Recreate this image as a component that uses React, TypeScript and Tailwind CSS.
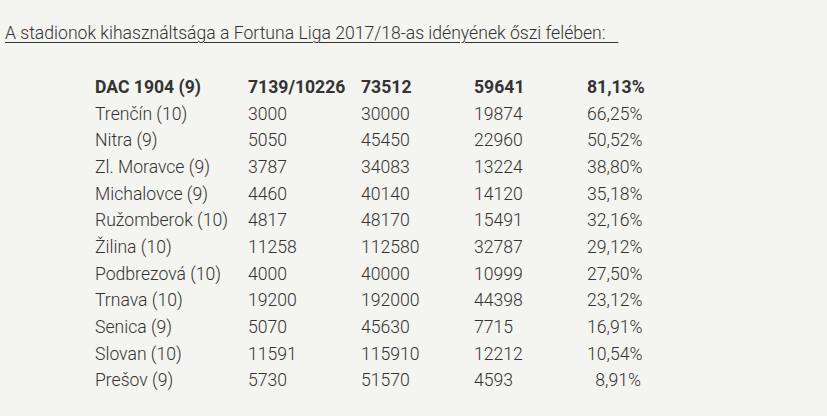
const rows: [string, string, string, string, string][] = [
  ["DAC 1904 (9)", "7139/10226", "73512", "59641", "81,13%"],
  ["Trenčín (10)", "3000", "30000", "19874", "66,25%"],
  ["Nitra (9)", "5050", "45450", "22960", "50,52%"],
  ["Zl. Moravce (9)", "3787", "34083", "13224", "38,80%"],
  ["Michalovce (9)", "4460", "40140", "14120", "35,18%"],
  ["Ružomberok (10)", "4817", "48170", "15491", "32,16%"],
  ["Žilina (10)", "11258", "112580", "32787", "29,12%"],
  ["Podbrezová (10)", "4000", "40000", "10999", "27,50%"],
  ["Trnava (10)", "19200", "192000", "44398", "23,12%"],
  ["Senica (9)", "5070", "45630", "7715", "16,91%"],
  ["Slovan (10)", "11591", "115910", "12212", "10,54%"],
  ["Prešov (9)", "5730", "51570", "4593", "8,91%"],
]

export default function App() {
  return (
    <div
      className="w-[827px] h-[416px] overflow-hidden bg-[#f4f4f0] text-[#333333] font-light"
      style={{ fontFamily: "Roboto, 'Noto Sans', sans-serif" }}
    >
      <div className="pl-[5px] pt-[20px]">
        <p className="text-[17.6px] leading-[26px] underline underline-offset-[3px] whitespace-pre">
          {"A stadionok kihasználtsága a Fortuna Liga 2017/18-as idényének őszi felében:   "}
        </p>
      </div>
      <div className="pl-[95px] pt-[28px] text-[17.6px] leading-[26.67px]">
        {rows.map((r, k) => (
          <div key={k} className={"flex whitespace-nowrap " + (k === 0 ? "font-bold" : "")}>
            <div className="w-[153px]">{r[0]}</div>
            <div className="w-[113px]">{r[1]}</div>
            <div className="w-[113px]">{r[2]}</div>
            <div className="w-[113px]">{r[3]}</div>
            <div className="w-[54px] text-right">{r[4]}</div>
          </div>
        ))}
      </div>
    </div>
  )
}
